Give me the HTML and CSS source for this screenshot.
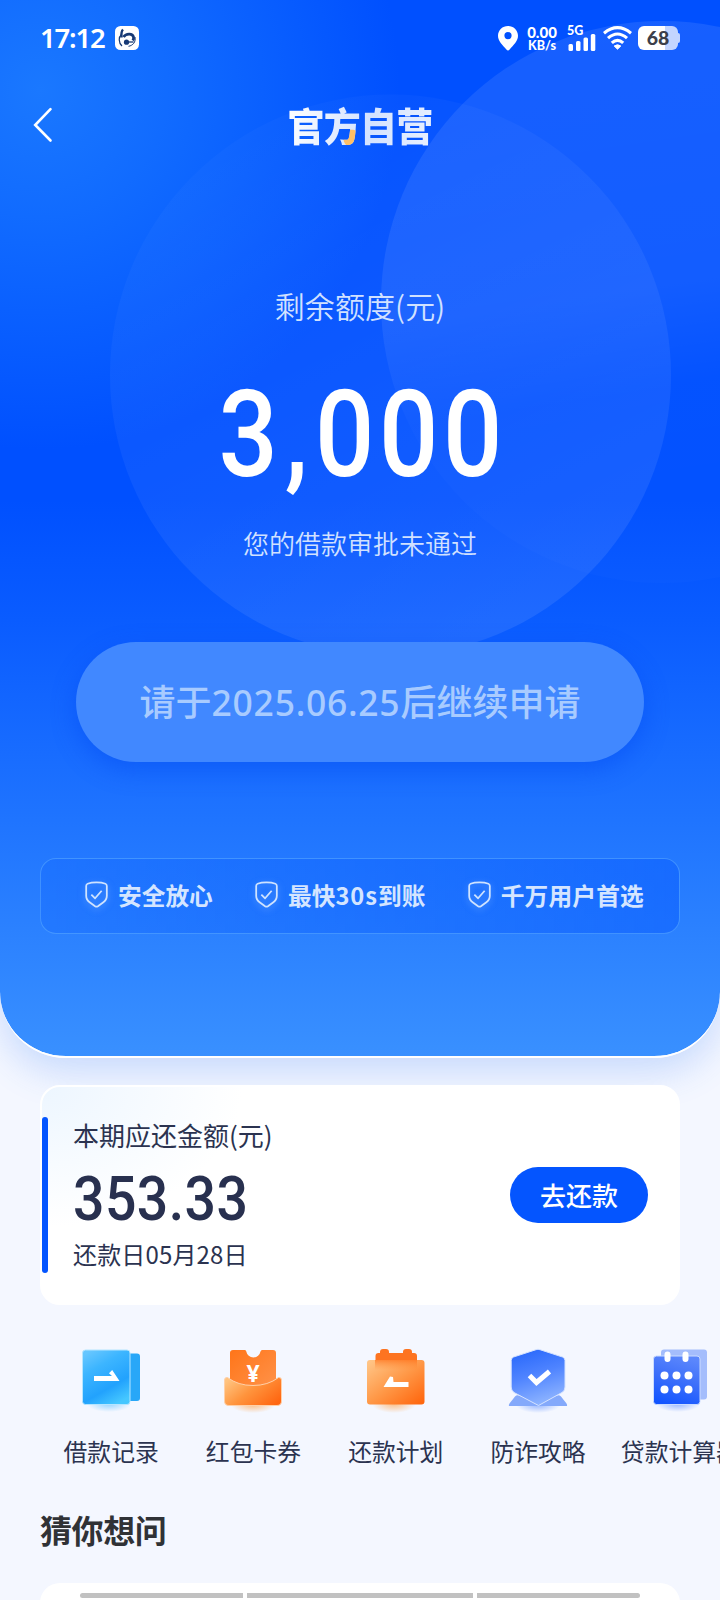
FILE: index.html
```html
<!DOCTYPE html>
<html lang="zh-CN">
<head>
<meta charset="utf-8">
<title>官方自营</title>
<link rel="stylesheet" href="styles.css">
</head>
<body>
<div class="screen">
  <section class="hero">
    <svg class="hero-circles" viewBox="0 0 720 1056">
      <defs>
        <linearGradient id="c1" x1="0.2" y1="0" x2="0.7" y2="1">
          <stop offset="0" stop-color="#fff" stop-opacity="0.015"/>
          <stop offset="1" stop-color="#fff" stop-opacity="0.09"/>
        </linearGradient>
        <linearGradient id="c2" x1="0.35" y1="0" x2="0.5" y2="1">
          <stop offset="0" stop-color="#fff" stop-opacity="0.09"/>
          <stop offset="0.48" stop-color="#fff" stop-opacity="0.075"/>
          <stop offset="0.66" stop-color="#fff" stop-opacity="0.015"/>
          <stop offset="1" stop-color="#fff" stop-opacity="0.012"/>
        </linearGradient>
      </defs>
      <circle cx="390.5" cy="375" r="280.5" fill="url(#c1)"/>
      <circle cx="662" cy="302" r="281" fill="url(#c2)"/>
    </svg>

    <div class="status">
      <span class="time">17:12</span>
      <svg class="app-icon" width="24" height="24" viewBox="0 0 24 24">
        <rect width="24" height="24" rx="5.5" fill="#fff"/>
        <g fill="none" stroke="#173a75">
          <path d="M8 3.500C6.500 5 6.200 8 6.500 11.500" stroke-width="2.400"/>
          <path d="M6.500 8.500C3.500 11 3.300 16.500 7 20" stroke-width="1.200"/>
          <path d="M8.500 11C11 7.500 17.500 7 18.500 11C18.900 12.500 18.500 13.500 17.800 14.500" stroke-width="2.800"/>
          <path d="M20 11C21 16 18 19.500 13.500 20.300" stroke-width="1"/>
          <path d="M13 16H18.500" stroke-width="1.300"/>
        </g>
        <circle cx="11.500" cy="16.200" r="2.600" fill="#173a75"/>
      </svg>
      <span class="spacer"></span>
      <svg class="pin" width="20" height="25" viewBox="0 0 20 25"><path fill="#fff" fill-rule="evenodd" d="M10 0C4.500 0 0 4.200 0 9.800C0 15 4.500 19 8.400 23.600Q10 25.300 11.600 23.600C15.500 19 20 15 20 9.800C20 4.200 15.500 0 10 0ZM10 6A3.600 3.600 0 1 1 10 13.200A3.600 3.600 0 0 1 10 6Z"/></svg>
      <div class="speed"><span>0.00</span><span>KB/s</span></div>
      <div class="signal">
        <span>5G</span>
        <svg width="28" height="25" viewBox="0 0 28 25" fill="#fff"><rect x="0.500" y="18" width="4.500" height="7" rx="1.500"/><rect x="8" y="15" width="4.500" height="10" rx="1.500"/><rect x="15.500" y="11.500" width="4.500" height="13.500" rx="1.500"/><rect x="22.800" y="8" width="4.500" height="17" rx="1.500"/></svg>
      </div>
      <svg class="wifi" width="29" height="24" viewBox="0 0 29 24" fill="none" stroke="#fff" stroke-width="3.100"><path d="M1 7.200Q14.500-3.800 28 7.200"/><path d="M5 12.200Q14.500 3.800 24 12.200"/><path d="M8.800 16.900Q14.500 11.700 20.200 16.900"/><path d="M11.200 20L14.500 23.200L17.800 20Q14.500 17.500 11.200 20Z" fill="#fff" stroke-width="1"/></svg>
      <div class="battery"><span>68</span></div>
    </div>

    <header class="nav">
      <svg class="back" width="20" height="36" viewBox="0 0 20 36"><path d="M17.500 2.200L2.200 18L17.500 33.500" fill="none" stroke="#fff" stroke-width="2.600" stroke-linecap="round"/></svg>
      <h1 class="brand">官方自营</h1>
    </header>

    <p class="quota-label">剩余额度(元)</p>
    <p class="quota"><span class="quota-num">3<span class="comma">,</span>000</span></p>
    <p class="quota-note">您的借款审批未通过</p>
    <button class="apply">请于<span class="date">2025.06.25</span>后继续申请</button>

    <div class="features">
      <div class="feature"><svg class="shield" width="23" height="30" viewBox="0 0 24 32"><path d="M12 2.500C15 2.500 19 3 21.500 4Q23 4.600 23 6.500V17Q23 21 19 24L13.500 28Q12 29 10.500 28L5 24Q1 21 1 17V6.500Q1 4.600 2.500 4C5 3 9 2.500 12 2.500Z"/><path d="M6.500 15.500L10.500 19.500L17.500 11.500"/></svg><span>安全放心</span></div>
      <div class="feature"><svg class="shield" width="23" height="30" viewBox="0 0 24 32"><path d="M12 2.500C15 2.500 19 3 21.500 4Q23 4.600 23 6.500V17Q23 21 19 24L13.500 28Q12 29 10.500 28L5 24Q1 21 1 17V6.500Q1 4.600 2.500 4C5 3 9 2.500 12 2.500Z"/><path d="M6.500 15.500L10.500 19.500L17.500 11.500"/></svg><span>最快<span class="secs">30s</span>到账</span></div>
      <div class="feature"><svg class="shield" width="23" height="30" viewBox="0 0 24 32"><path d="M12 2.500C15 2.500 19 3 21.500 4Q23 4.600 23 6.500V17Q23 21 19 24L13.500 28Q12 29 10.500 28L5 24Q1 21 1 17V6.500Q1 4.600 2.500 4C5 3 9 2.500 12 2.500Z"/><path d="M6.500 15.500L10.500 19.500L17.500 11.500"/></svg><span>千万用户首选</span></div>
    </div>
  </section>

  <section class="bill">
    <div class="bar"></div>
    <div class="bill-info">
      <p class="bill-label">本期应还金额(元)</p>
      <p class="bill-amount"><span>353.33</span></p>
      <p class="bill-date">还款日05月28日</p>
    </div>
    <button class="repay">去还款</button>
  </section>

  <nav class="menu">
    <a class="item">
      <svg width="72" height="76" viewBox="0 0 72 76">
        <defs>
          <linearGradient id="a1" x1="0.2" y1="0" x2="0.7" y2="1"><stop offset="0" stop-color="#66c6ff"/><stop offset="0.3" stop-color="#3cb5ff"/><stop offset="0.7" stop-color="#22a2fd"/><stop offset="1" stop-color="#45c7ff"/></linearGradient>
          <radialGradient id="s1"><stop offset="0" stop-color="#4bb9ff" stop-opacity="0.55"/><stop offset="1" stop-color="#4bb9ff" stop-opacity="0"/></radialGradient>
        </defs>
        <ellipse cx="34" cy="64" rx="22" ry="8" fill="url(#s1)"/>
        <rect x="46" y="13.500" width="19" height="47.500" rx="3" fill="#28a7f8"/>
        <rect x="7.500" y="10" width="47.500" height="54.500" rx="3" fill="url(#a1)" stroke="#b5e5ff" stroke-width="1"/>
        <path d="M19 36H37L34 33.200L37.200 30L44.500 41H19Z" fill="#fff"/>
      </svg>
      <span>借款记录</span>
    </a>
    <a class="item">
      <svg width="72" height="76" viewBox="0 0 72 76">
        <defs>
          <linearGradient id="a2" x1="0" y1="0" x2="1" y2="1"><stop offset="0" stop-color="#ff7519"/><stop offset="1" stop-color="#ff944c"/></linearGradient>
          <linearGradient id="b2" x1="0" y1="0.200" x2="1" y2="0.800"><stop offset="0" stop-color="#ffc37f"/><stop offset="0.450" stop-color="#ff943d"/><stop offset="1" stop-color="#ff6510"/></linearGradient>
          <radialGradient id="s2"><stop offset="0" stop-color="#ffa34c" stop-opacity="0.65"/><stop offset="1" stop-color="#ffa34c" stop-opacity="0"/></radialGradient>
        </defs>
        <ellipse cx="36" cy="65" rx="22" ry="8" fill="url(#s2)"/>
        <path d="M16 10H28Q29 10 29.300 11.500A7.200 7.200 0 0 0 43.500 11.500Q44 10 45 10H56Q59 10 59 13V52H13V13Q13 10 16 10Z" fill="url(#a2)"/>
        <text class="yen" x="36" y="42">¥</text>
        <path d="M10.500 37.500Q21 45.500 36 45.500Q51 45.500 61.500 37.500Q64.500 37 64.500 40V61Q64.500 65.500 60 65.500H12Q7.500 65.500 7.500 61V40Q7.500 37 10.500 37.500Z" fill="url(#b2)" stroke="#ffd0a8" stroke-width="1"/>
      </svg>
      <span>红包卡券</span>
    </a>
    <a class="item">
      <svg width="72" height="76" viewBox="0 0 72 76">
        <defs>
          <linearGradient id="a3" x1="0" y1="0.100" x2="0.900" y2="1"><stop offset="0" stop-color="#ffc485"/><stop offset="0.500" stop-color="#ff9847"/><stop offset="1" stop-color="#ff6810"/></linearGradient>
          <linearGradient id="b3" x1="0" y1="0" x2="0" y2="1"><stop offset="0" stop-color="#ff7019" stop-opacity="0.700"/><stop offset="1" stop-color="#ff8b35" stop-opacity="0"/></linearGradient>
        </defs>
        <ellipse cx="34" cy="64" rx="22" ry="9" fill="url(#s2)"/>
        <path d="M20 13V12Q20 9 23 9H26Q29 9 29 12V13H43V12Q43 9 46 9H49Q52 9 52 12V13H54Q57 13 57 16V30H15.500V16Q15.500 13 18.500 13Z" fill="#fd7421"/>
        <rect x="7" y="20" width="57.500" height="44.500" rx="3" fill="url(#a3)"/>
        <rect x="15" y="20" width="42" height="10" fill="url(#b3)"/>
        <path d="M48.500 42H33.500L33 37L30 36.500L23.500 47H48.500Z" fill="#fff"/>
      </svg>
      <span>还款计划</span>
    </a>
    <a class="item">
      <svg width="72" height="76" viewBox="0 0 72 76">
        <defs>
          <linearGradient id="a4" x1="0.300" y1="0" x2="0.600" y2="1"><stop offset="0" stop-color="#2a69fb"/><stop offset="0.450" stop-color="#4f84ff"/><stop offset="1" stop-color="#92b7ff"/></linearGradient>
          <radialGradient id="s4"><stop offset="0" stop-color="#5b8dff" stop-opacity="0.600"/><stop offset="1" stop-color="#5b8dff" stop-opacity="0"/></radialGradient>
        </defs>
        <ellipse cx="36" cy="65" rx="22" ry="8" fill="url(#s4)"/>
        <path d="M7 66Q6.500 65 7.500 63.500L13 56.500Q15 54.500 18 56L36 60L54 56Q57 54.500 59 56.500L64.500 63.500Q65.500 65 65 66Z" fill="#84a9fb"/>
        <path d="M34 9.700Q36 8.800 38 9.700L60.500 17Q63 18 63 20.500V47Q63 50.500 60 52.500L36.500 65.500L12 52.500Q9.200 50.500 9.200 47V20.500Q9.200 18 11.500 17Z" fill="url(#a4)" stroke="#d5e3ff" stroke-width="1"/>
        <path d="M27.500 35.500L34.500 42.500L47.500 31.500" fill="none" stroke="#fff" stroke-width="5"/>
      </svg>
      <span>防诈攻略</span>
    </a>
    <a class="item">
      <svg width="72" height="76" viewBox="0 0 72 76">
        <defs>
          <linearGradient id="a5" x1="0.600" y1="0" x2="0.300" y2="1"><stop offset="0" stop-color="#5b87fc"/><stop offset="0.450" stop-color="#3e70fa"/><stop offset="1" stop-color="#1355ff"/></linearGradient>
        </defs>
        <ellipse cx="34" cy="64" rx="22" ry="8" fill="url(#s4)"/>
        <rect x="17" y="9.500" width="46" height="50" rx="3" fill="#a4bdfc"/>
        <rect x="9.500" y="16" width="46.500" height="48.500" rx="3" fill="url(#a5)" stroke="#cbdcff" stroke-width="1"/>
        <path d="M23.500 14.500V19M41.500 14.500V19" stroke="#fff" stroke-width="6" stroke-linecap="round"/>
        <g fill="#fff"><circle cx="20.500" cy="35.500" r="4"/><circle cx="32.500" cy="35.500" r="4"/><circle cx="44.500" cy="35.500" r="4"/><circle cx="20.500" cy="49.500" r="4"/><circle cx="32.500" cy="49.500" r="4"/><circle cx="44.500" cy="49.500" r="4"/></g>
      </svg>
      <span>贷款计算器</span>
    </a>
  </nav>

  <h2 class="faq-title">猜你想问</h2>
  <section class="faq">
    <div class="home-bar"><i class="side"></i><i class="mid"></i><i class="side"></i></div>
  </section>
</div>
</body>
</html>
```
FILE: styles.css
```css
* { box-sizing: border-box; margin: 0; padding: 0; }

body {
  width: 720px;
  height: 1600px;
  overflow: hidden;
  background: #f4f7ff;
  font-family: "Noto Sans CJK SC", sans-serif;
  color: #2b3350;
}

.screen {
  width: 720px;
  height: 1600px;
  overflow: hidden;
  display: flex;
  flex-direction: column;
}

button { border: 0; font-family: inherit; display: block; }

/* Hero */
.hero {
  position: relative;
  flex: none;
  height: 1058px;
  border-bottom: 2px solid #fff;
  border-radius: 0 0 66px 66px;
  background:
    radial-gradient(circle 360px at 40px 90px, #1a78ff 0, rgba(20, 112, 255, 0.85) 35%, rgba(0, 80, 255, 0) 100%),
    linear-gradient(#0050ff 0, #0050ff 500px, #0a5cff 620px, #1f74ff 820px, #3990ff 1056px);
  background-clip: padding-box;
  box-shadow: 0 14px 36px rgba(60, 125, 245, 0.24);
  display: flex;
  flex-direction: column;
  align-items: center;
}

.hero-circles { position: absolute; left: 0; top: 0; width: 720px; height: 1056px; }
.status, .nav, .quota-label, .quota, .quota-note, .apply, .features { position: relative; flex: none; }

.status {
  width: 100%;
  height: 76px;
  padding: 0 42px 0 40px;
  display: flex;
  align-items: center;
  color: #fff;
  font-family: Lato, "Noto Sans", sans-serif;
}
.time { font-family: "Noto Sans", sans-serif; font-size: 27.500px; line-height: 36px; font-weight: 600; width: 65px; white-space: nowrap; letter-spacing: -1.200px; }
.app-icon { margin-left: 10px; }
.spacer { flex: 1; }
.speed { margin-left: 8px; width: 32px; display: flex; flex-direction: column; align-items: center; font-weight: 900; font-size: 15px; line-height: 14px; }
.speed span:last-child { font-size: 12.500px; line-height: 13px; }
.signal { margin-left: 9px; width: 30px; height: 25px; position: relative; }
.signal span { position: absolute; left: 0; top: -3px; font-size: 12.500px; line-height: 16px; font-weight: 900; }
.signal svg { display: block; margin-left: 1px; }
.wifi { margin-left: 6px; }
.battery {
  margin-left: 6px;
  width: 40px;
  height: 24px;
  border-radius: 6px;
  background: linear-gradient(90deg, #fff 0, #fff 27px, #c3d5ff 27px);
  color: #3c3f4a;
  font-size: 19.500px;
  line-height: 24px;
  font-weight: 900;
  text-align: center;
  position: relative;
}
.battery::after { content: ""; position: absolute; right: -2px; top: 7px; width: 2px; height: 10px; border-radius: 0 2px 2px 0; background: #c3d5ff; }

.nav { width: 100%; height: 100px; display: flex; align-items: center; justify-content: center; }
.back { position: absolute; left: 33px; top: 31px; }
.brand {
  margin-top: -4px;
  font-size: 37px;
  line-height: 50px;
  font-weight: 900;
  letter-spacing: -0.800px;
  color: transparent;
  background: radial-gradient(circle at 64px 39px, #ffc067 0, #ffc067 8px, transparent 9px), linear-gradient(100deg, #fff, #d3e2ff 55%, #e8f0ff);
  background-clip: text;
  -webkit-background-clip: text;
  transform: scaleY(1.040);
}

.quota-label { margin-top: 107px; font-size: 30px; line-height: 44px; color: #d1e1ff; font-weight: 350; letter-spacing: 0.100px; }
.quota { margin-top: 38px; height: 139px; color: #fff; font-family: Roboto, sans-serif; font-weight: 500; }
.quota-num { display: block; margin-left: 6px; font-size: 120px; line-height: 140px; letter-spacing: 5.500px; transform: scaleX(0.870); white-space: nowrap; }
.comma { display: inline-block; width: 37px; text-align: center; }
.quota-note { margin-top: 19px; font-size: 26px; line-height: 40px; color: #d1e1ff; font-weight: 350; }

.apply {
  margin-top: 79px;
  width: 568px;
  height: 120px;
  border-radius: 60px;
  background: #4188ff;
  box-shadow: 0 8px 24px rgba(0, 72, 240, 0.45);
  color: #a8cbff;
  font-size: 36px;
  line-height: 117px;
  padding-bottom: 3px;
  font-weight: 500;
  white-space: nowrap;
}
.date { font-family: "Noto Sans", sans-serif; font-size: 35.500px; letter-spacing: 0.700px; }

.features {
  margin-top: 96px;
  width: 640px;
  height: 76px;
  border: 1.5px solid rgba(90, 170, 255, 0.6);
  border-radius: 16px;
  background: linear-gradient(90deg, rgba(20, 105, 255, 0.35), rgba(15, 98, 255, 0.6));
  padding: 0 35px 2px 44px;
  display: flex;
  align-items: center;
  justify-content: space-between;
}
.feature { display: flex; align-items: center; gap: 10px; color: #d4e5ff; font-size: 23.700px; line-height: 36px; font-weight: 700; white-space: nowrap; }
.feature:last-child { letter-spacing: 0.200px; }
.secs { letter-spacing: 1px; }
.shield { fill: none; stroke: #cfe3ff; stroke-width: 1.900; stroke-linejoin: round; filter: drop-shadow(0 2px 3px rgba(150, 200, 255, 0.5)); }

/* Bill card */
.bill {
  position: relative;
  flex: none;
  margin: 27px 40px 0;
  height: 220px;
  border: 2px solid #fff;
  border-radius: 20px;
  background: radial-gradient(ellipse 200px 140px at 0 0, #edf6ff, #fff);
  display: flex;
  align-items: center;
  padding-right: 30px;
}
.bar { width: 6px; height: 156px; border-radius: 3px; background: #0455ff; }
.bill-info { flex: 1; height: 216px; padding: 28px 0 0 25px; }
.bill-label { font-size: 26px; line-height: 40px; }
.bill-amount { height: 76px; padding-top: 10px; font-family: Roboto, sans-serif; font-weight: 500; font-size: 60.500px; line-height: 70px; color: #28304f; }
.bill-amount span { display: inline-block; transform: scaleX(0.915); transform-origin: 0 50%; letter-spacing: 0.500px; }
.bill-date { margin-top: 5px; font-size: 24px; line-height: 36px; letter-spacing: 0.150px; }
.repay { width: 138px; height: 56px; border-radius: 28px; background: #0455ff; color: #fff; font-size: 26px; line-height: 54px; font-weight: 500; }

/* Shortcuts */
.menu { flex: none; margin: 35px 0 0 40px; display: flex; width: 720px; }
.item { flex: none; width: 142.300px; display: flex; flex-direction: column; align-items: center; }
.item span { margin: 17px 0 1px; font-size: 23.800px; line-height: 36px; white-space: nowrap; }
.item svg { display: block; }
.yen { fill: #fff; font: 700 23px "Noto Sans", sans-serif; text-anchor: middle; }

.faq-title { flex: none; margin: 35px 0 0 40px; font-size: 32px; line-height: 48px; font-weight: 700; color: #303236; letter-spacing: -0.400px; }
.faq { flex: none; margin: 30px 40px 0; height: 60px; border-radius: 20px; background: #fff; padding-top: 10px; }
.home-bar { width: 560px; margin: 0 auto; display: flex; gap: 4px; }
.home-bar i { height: 5px; background: #c1c1c1; }
.side { width: 163px; }
.side:first-child { border-radius: 3px 0 0 3px; }
.side:last-child { border-radius: 0 3px 3px 0; }
.mid { flex: 1; }
```
